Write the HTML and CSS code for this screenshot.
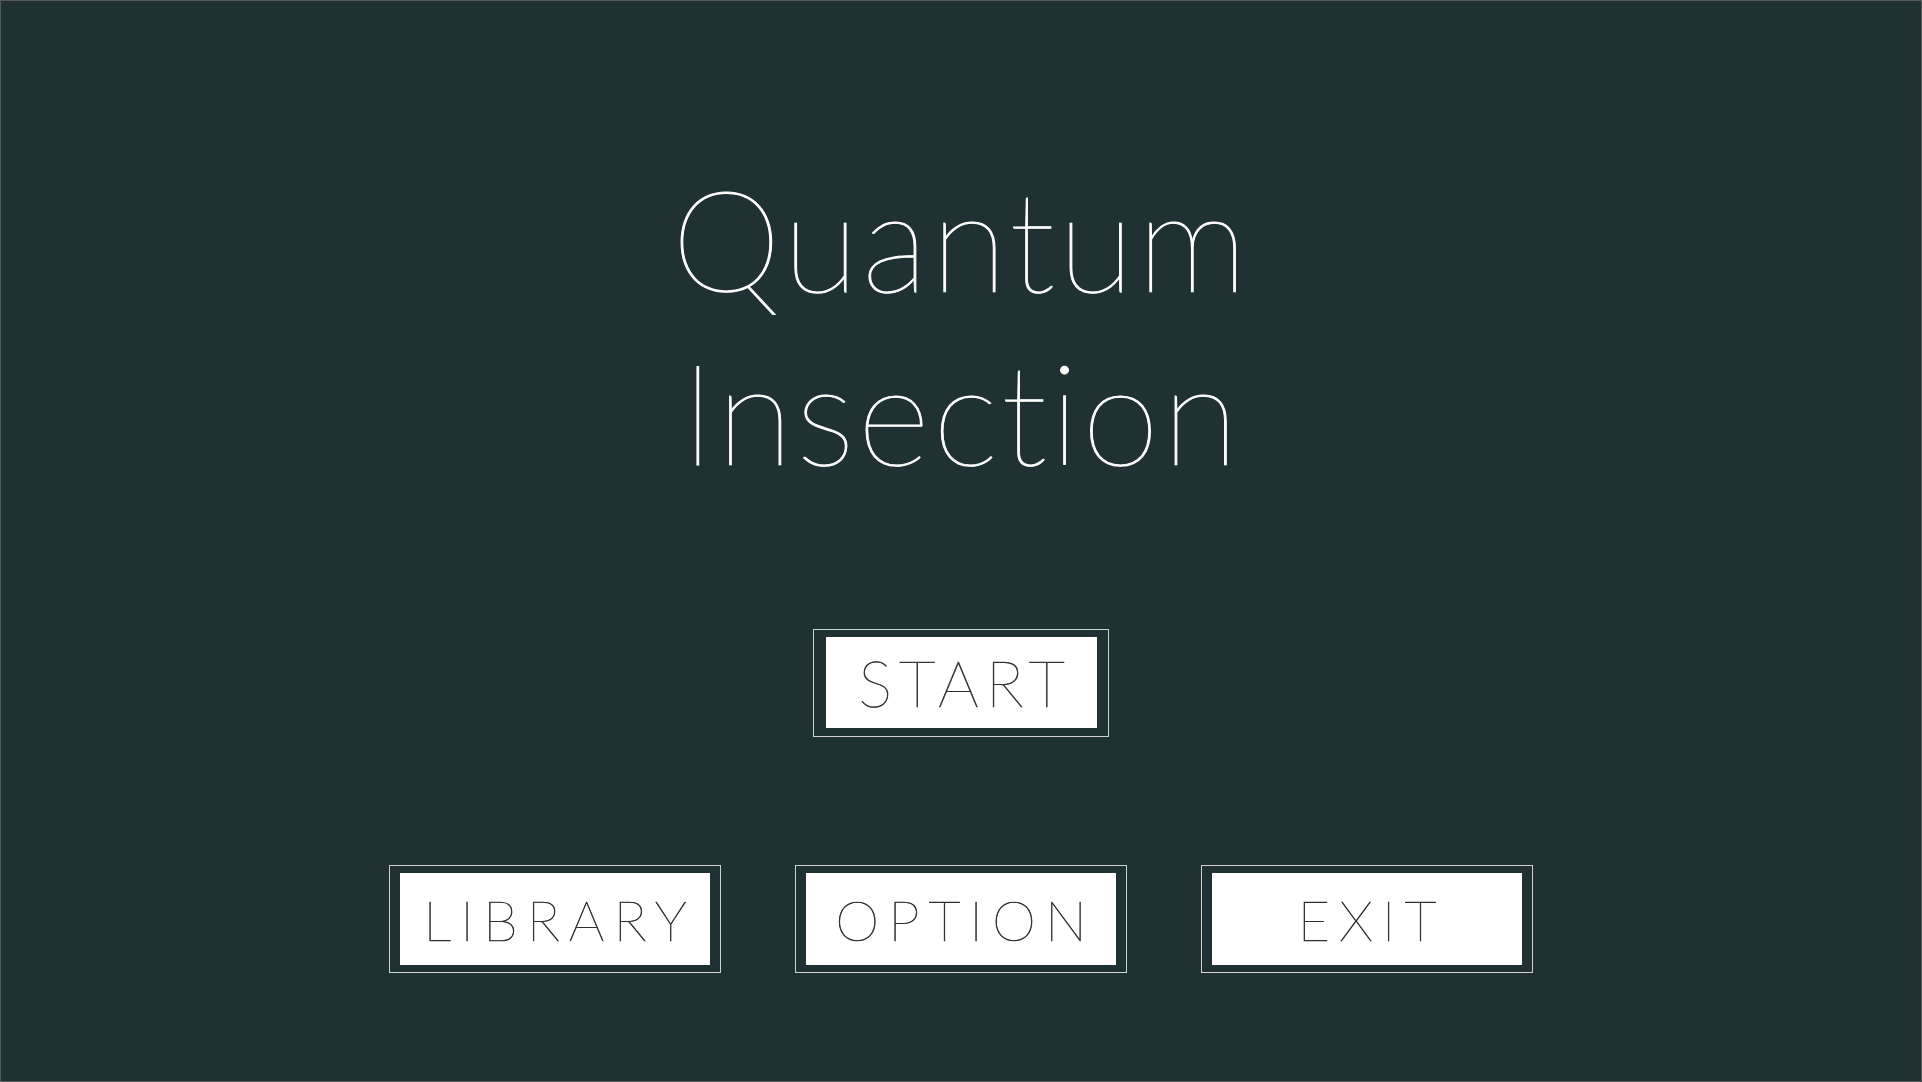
FILE: index.html
```html
<!DOCTYPE html>
<html lang="en">
<head>
    <meta charset="UTF-8">
    <title>Quantum Insection</title>
    <link rel="stylesheet" href="styles.css">
</head>
<body>
    <div class="screen">
        <h1 class="title">Quantum<br>Insection</h1>

        <a href="#" class="menu-button start-button"><span class="face">START</span></a>

        <div class="menu-row">
            <a href="#" class="menu-button"><span class="face">LIBRARY</span></a>
            <a href="#" class="menu-button"><span class="face">OPTION</span></a>
            <a href="#" class="menu-button"><span class="face">EXIT</span></a>
        </div>
    </div>
</body>
</html>
```

FILE: styles.css
```css
body {
    margin: 0;
    font-family: 'Lato', 'Open Sans', sans-serif;
    font-variant-ligatures: none;
}
.screen {
    box-sizing: border-box;
    height: 1082px;
    border: 1px solid #55595a;
    background-color: #203134;
    display: flex;
    flex-direction: column;
    align-items: center;
}
.title {
    margin: 151px 0 0;
    font-size: 140px;
    font-weight: 100;
    line-height: 173px;
    letter-spacing: 3px;
    color: #fff;
    -webkit-text-stroke: 1px #fff;
    text-align: center;
}
.menu-button {
    display: block;
    border: 1px solid #cfd0cf;
    padding: 7px 11px 8px 12px;
    text-decoration: none;
}
.face {
    box-sizing: border-box;
    display: flex;
    align-items: center;
    justify-content: center;
    height: 92px;
    background-color: #fff;
    color: #2b3030;
    -webkit-text-stroke: 0.6px #2b3030;
    font-weight: 100;
    font-size: 56px;
    letter-spacing: 9px;
    padding-left: 9px;
}
.start-button {
    margin-top: 131px;
}
.start-button .face {
    width: 271px;
    height: 91px;
    font-size: 64px;
    letter-spacing: 7px;
    padding-left: 7px;
}
.menu-row {
    display: flex;
    gap: 74px;
    margin-top: 128px;
}
.menu-row .menu-button {
    padding: 7px 10px;
}
.menu-row .face {
    width: 310px;
}
```
